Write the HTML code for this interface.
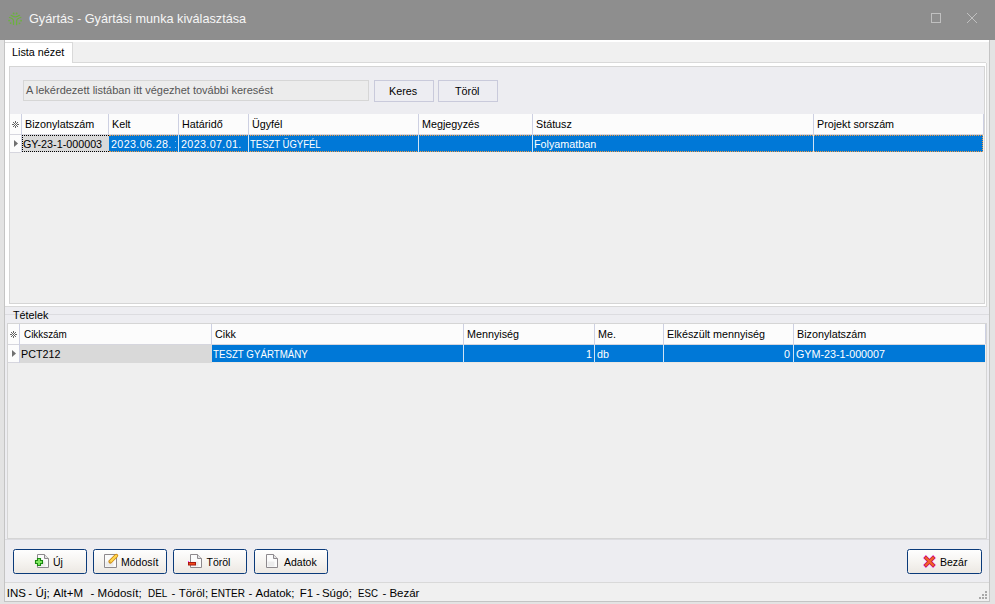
<!DOCTYPE html>
<html><head><meta charset="utf-8">
<style>
*{box-sizing:border-box;margin:0;padding:0}
html,body{width:995px;height:604px;overflow:hidden;background:#e3e3e3;font-family:"Liberation Sans",sans-serif;font-size:10.5px;color:#000}
.a{position:absolute}
.t{position:absolute;white-space:nowrap;line-height:12px;font-size:10.75px}
#title{left:0;top:0;width:995px;height:40px;background:#8e8e8e}
#client{left:4px;top:40px;width:986px;height:562px;background:#f0f0f0;border:1px solid #c4c4c4;border-top:none}
.hdr{background:#fcfcfc}
.vl{position:absolute;width:1px}
.hl{position:absolute;height:1px}
.btn{position:absolute;height:25px;width:74px;border:1px solid #0a3a7a;border-radius:2.5px;background:linear-gradient(#fefefe,#f6f4f1 50%,#ece8e3)}
.btn .lbl{position:absolute;top:6px;white-space:nowrap;font-size:10.5px;color:#000;line-height:12px}
</style></head><body>
<!-- title bar -->
<div id="title" class="a">
  <svg class="a" style="left:4px;top:8px" width="24" height="22" viewBox="4 8 24 22">
    <g fill="#6cb23d">
      <circle cx="13.6" cy="13.5" r="0.9"/><circle cx="16.6" cy="13.5" r="0.9"/>
      <circle cx="9.1" cy="20.6" r="0.9"/><circle cx="21.1" cy="20.7" r="0.9"/>
      <circle cx="10.6" cy="23.1" r="0.9"/><circle cx="19.5" cy="23.3" r="0.9"/>
    </g>
    <g stroke="#6cb23d" stroke-width="1.25" fill="none" stroke-linecap="round">
      <path d="M11.1 15.3 Q15.3 18.5 19.5 15.3"/>
      <path d="M9.5 17.5 Q13.5 18.5 13.5 21 L13.5 24.4"/>
      <path d="M20.8 17.5 Q16.6 18.5 16.6 21 L16.6 24.7"/>
    </g>
  </svg>
  <div class="t" style="left:29px;top:12px;font-size:12.7px;line-height:14px;color:#f6f6f6">Gyártás - Gyártási munka kiválasztása</div>
  <div class="a" style="left:931px;top:13px;width:10px;height:10px;border:1px solid #c0c0c0"></div>
  <svg class="a" style="left:966px;top:12px" width="12" height="12" viewBox="0 0 12 12"><path d="M1 1L11 11M11 1L1 11" stroke="#c0c0c0" stroke-width="1"/></svg>
</div>

<div id="client" class="a"></div>

<!-- tab strip -->
<div class="a" style="left:5px;top:40px;width:984px;height:2px;background:#fff"></div>
<div class="a" style="left:5px;top:42px;width:68px;height:22px;background:#fff;border-top:1px solid #d9d9d9;border-right:1px solid #d9d9d9"></div>
<div class="hl" style="left:73px;top:62px;width:913px;background:#d9d9d9"></div>
<div class="t" style="left:12px;top:46px;font-size:10.8px">Lista nézet</div>

<!-- tab page -->
<div class="a" style="left:5px;top:63px;width:982px;height:244px;background:#fff;border-right:1px solid #d9d9d9;border-bottom:1px solid #d9d9d9"></div>
<div class="a" style="left:9px;top:66px;width:976px;height:238px;background:#ededf1;border:1px solid #d5d5d5"></div>

<!-- search -->
<div class="a" style="left:23px;top:80px;width:346px;height:21px;background:#ececec;border:1px solid #d6d6d6"></div>
<div class="t" style="left:26px;top:84px;color:#555;font-size:11px">A lekérdezett listában itt végezhet további keresést</div>
<div class="a" style="left:374px;top:80px;width:60px;height:22px;background:#ededf2;border:1px solid #c9cadb"></div>
<div class="t" style="left:389px;top:85px">Keres</div>
<div class="a" style="left:438px;top:80px;width:60px;height:22px;background:#ededf2;border:1px solid #c9cadb"></div>
<div class="t" style="left:455px;top:85px">Töröl</div>

<!-- upper grid -->
<div class="a" style="left:10px;top:114px;width:974px;height:189px;background:#efefef"></div>
<div class="a hdr" style="left:10px;top:114px;width:973px;height:20px"></div>
<div class="hl" style="left:10px;top:134px;width:974px;background:#d6d6de"></div>
<div class="vl" style="left:983px;top:114px;height:20px;background:#cdd0e2"></div>
<div class="a" style="left:10px;top:135px;width:11px;height:17px;background:#fcfcfc"></div>
<div class="hl" style="left:10px;top:152px;width:11px;background:#d6d6de"></div>
<div class="a" style="left:109px;top:135px;width:874px;height:17px;background:#0078d7"></div>
<div class="a" style="left:22px;top:135px;width:87px;height:17px;background:#d9d9d9;border:1px dotted #000;border-right:none"></div>
<div class="a" style="left:109px;top:135px;width:874px;height:17px;border-top:1px dotted #f39a40;border-bottom:1px dotted #f39a40;border-right:1px dotted #f39a40"></div>
<div class="vl" style="left:21px;top:114px;height:38px;background:#cdd0e2"></div>
<div class="vl" style="left:108px;top:114px;height:20px;background:#cdd0e2"></div>
<div class="vl" style="left:178px;top:114px;height:20px;background:#cdd0e2"></div>
<div class="vl" style="left:248px;top:114px;height:20px;background:#cdd0e2"></div>
<div class="vl" style="left:418px;top:114px;height:20px;background:#cdd0e2"></div>
<div class="vl" style="left:532px;top:114px;height:20px;background:#cdd0e2"></div>
<div class="vl" style="left:813px;top:114px;height:20px;background:#cdd0e2"></div>
<div class="vl" style="left:178px;top:135px;height:17px;background:#cfe3f5"></div>
<div class="vl" style="left:248px;top:135px;height:17px;background:#cfe3f5"></div>
<div class="vl" style="left:418px;top:135px;height:17px;background:#cfe3f5"></div>
<div class="vl" style="left:532px;top:135px;height:17px;background:#cfe3f5"></div>
<div class="vl" style="left:813px;top:135px;height:17px;background:#cfe3f5"></div>
<svg class="a" style="left:10px;top:118px" width="11" height="13" shape-rendering="crispEdges"><g fill="#666"><rect x="5" y="3" width="1" height="1"/><rect x="5" y="4" width="1" height="1"/><rect x="3" y="4" width="1" height="1"/><rect x="7" y="4" width="1" height="1"/><rect x="4" y="5" width="1" height="1"/><rect x="6" y="5" width="1" height="1"/><rect x="2" y="6" width="1" height="1"/><rect x="3" y="6" width="1" height="1"/><rect x="5" y="6" width="1" height="1"/><rect x="7" y="6" width="1" height="1"/><rect x="8" y="6" width="1" height="1"/><rect x="4" y="7" width="1" height="1"/><rect x="6" y="7" width="1" height="1"/><rect x="3" y="8" width="1" height="1"/><rect x="5" y="8" width="1" height="1"/><rect x="7" y="8" width="1" height="1"/><rect x="5" y="9" width="1" height="1"/></g></svg>
<svg class="a" style="left:14px;top:140px" width="5" height="8"><path d="M0 0L4 3.5L0 7Z" fill="#707070"/></svg>
<div class="t" style="left:25px;top:118px">Bizonylatszám</div>
<div class="t" style="left:112px;top:118px">Kelt</div>
<div class="t" style="left:182px;top:118px">Határidő</div>
<div class="t" style="left:252px;top:118px">Ügyfél</div>
<div class="t" style="left:422px;top:118px">Megjegyzés</div>
<div class="t" style="left:536px;top:118px">Státusz</div>
<div class="t" style="left:817px;top:118px">Projekt sorszám</div>
<div class="t" style="left:23px;top:138px">GY-23-1-000003</div>
<div class="t" style="left:111px;top:138px;color:#fff;letter-spacing:0.35px">2023.06.28.</div>
<div class="t" style="left:181px;top:138px;color:#fff;letter-spacing:0.35px">2023.07.01.</div>
<div class="t" style="left:250px;top:138px;color:#fff;transform:scaleX(0.885);transform-origin:0 0">TESZT ÜGYFÉL</div>
<div class="t" style="left:534px;top:138px;color:#fff">Folyamatban</div>

<div class="a" style="left:175px;top:141px;width:1px;height:1px;background:#8cc4ee"></div><div class="a" style="left:175px;top:147px;width:1px;height:1px;background:#8cc4ee"></div>
<!-- Tételek group -->
<div class="a" style="left:5px;top:307px;width:984px;height:275px;background:#ededf1"></div>
<div class="hl" style="left:5px;top:314px;width:984px;background:#dcdce0"></div>
<div class="t" style="left:13px;top:309px">Tételek</div>

<!-- lower grid -->
<div class="a" style="left:7px;top:323px;width:980px;height:216px;background:#efefef;border:1px solid #d5d5d5"></div>
<div class="vl" style="left:985px;top:324px;height:20px;background:#cdd0e2"></div>
<div class="a hdr" style="left:8px;top:324px;width:977px;height:20px"></div>
<div class="hl" style="left:8px;top:344px;width:977px;background:#d6d6de"></div>
<div class="a" style="left:8px;top:345px;width:11px;height:17px;background:#fcfcfc"></div>
<div class="hl" style="left:8px;top:362px;width:11px;background:#d6d6de"></div>
<div class="a" style="left:20px;top:345px;width:192px;height:18px;background:#d9d9d9"></div>
<div class="hl" style="left:212px;top:362px;width:773px;background:#ebe7e3"></div>
<div class="a" style="left:212px;top:345px;width:773px;height:17px;background:#0078d7"></div>
<div class="vl" style="left:19px;top:324px;height:39px;background:#cdd0e2"></div>
<div class="vl" style="left:211px;top:324px;height:20px;background:#cdd0e2"></div>
<div class="vl" style="left:463px;top:324px;height:20px;background:#cdd0e2"></div>
<div class="vl" style="left:594px;top:324px;height:20px;background:#cdd0e2"></div>
<div class="vl" style="left:663px;top:324px;height:20px;background:#cdd0e2"></div>
<div class="vl" style="left:793px;top:324px;height:20px;background:#cdd0e2"></div>
<div class="vl" style="left:463px;top:345px;height:18px;background:#cfe3f5"></div>
<div class="vl" style="left:594px;top:345px;height:18px;background:#cfe3f5"></div>
<div class="vl" style="left:663px;top:345px;height:18px;background:#cfe3f5"></div>
<div class="vl" style="left:793px;top:345px;height:18px;background:#cfe3f5"></div>
<svg class="a" style="left:8px;top:328px" width="11" height="13" shape-rendering="crispEdges"><g fill="#666"><rect x="5" y="3" width="1" height="1"/><rect x="5" y="4" width="1" height="1"/><rect x="3" y="4" width="1" height="1"/><rect x="7" y="4" width="1" height="1"/><rect x="4" y="5" width="1" height="1"/><rect x="6" y="5" width="1" height="1"/><rect x="2" y="6" width="1" height="1"/><rect x="3" y="6" width="1" height="1"/><rect x="5" y="6" width="1" height="1"/><rect x="7" y="6" width="1" height="1"/><rect x="8" y="6" width="1" height="1"/><rect x="4" y="7" width="1" height="1"/><rect x="6" y="7" width="1" height="1"/><rect x="3" y="8" width="1" height="1"/><rect x="5" y="8" width="1" height="1"/><rect x="7" y="8" width="1" height="1"/><rect x="5" y="9" width="1" height="1"/></g></svg>
<svg class="a" style="left:12px;top:350px" width="5" height="8"><path d="M0 0L4 3.5L0 7Z" fill="#707070"/></svg>
<div class="t" style="left:23.5px;top:328px;transform:scaleX(0.92);transform-origin:0 0">Cikkszám</div>
<div class="t" style="left:215px;top:328px">Cikk</div>
<div class="t" style="left:467px;top:328px">Mennyiség</div>
<div class="t" style="left:598px;top:328px">Me.</div>
<div class="t" style="left:667px;top:328px">Elkészült mennyiség</div>
<div class="t" style="left:797px;top:328px">Bizonylatszám</div>
<div class="t" style="left:21px;top:348px">PCT212</div>
<div class="t" style="left:213px;top:348px;color:#fff;transform:scaleX(0.905);transform-origin:0 0">TESZT GYÁRTMÁNY</div>
<div class="t" style="left:586px;top:348px;color:#fff">1</div>
<div class="t" style="left:597px;top:348px;color:#fff">db</div>
<div class="t" style="left:784px;top:348px;color:#fff">0</div>
<div class="t" style="left:796px;top:348px;color:#fff">GYM-23-1-000007</div>
<div class="hl" style="left:5px;top:539px;width:984px;background:#dcdce0"></div>

<!-- buttons -->
<div class="btn" style="left:13px;top:549px"><div class="lbl" style="left:39px">Új</div></div>
<div class="btn" style="left:93px;top:549px"><div class="lbl" style="left:27px">Módosít</div></div>
<div class="btn" style="left:173px;top:549px"><div class="lbl" style="left:32.5px">Töröl</div></div>
<div class="btn" style="left:254px;top:549px"><div class="lbl" style="left:29px">Adatok</div></div>
<div class="btn" style="left:907px;top:549px;width:75px"><div class="lbl" style="left:32px">Bezár</div></div>

<svg class="a" style="left:0;top:0;pointer-events:none" width="995" height="604" viewBox="0 0 995 604"><path d="M37.5 554.5H44.5L48.5 558.5V567.5H37.5Z" fill="#fbfbfb" stroke="#8d898d" stroke-width="1"/><path d="M38.5 561.5h7.0V566.5H38.5Z" fill="#ececec"/><path d="M44.5 554.5V558.5H48.5" fill="#e4e4e4" stroke="#8d898d" stroke-width="1"/><path d="M37.5 558.5H40.5V560.5H42.5V563.5H40.5V565.5H37.5V563.5H35.5V560.5H37.5Z" fill="#80e860" stroke="#1b8a12" stroke-width="1.1"/><path d="M104.5 554.5H116.5L116.5 554.5V567.5H104.5Z" fill="#fbfbfb" stroke="#8d898d" stroke-width="1"/><path d="M105.5 561.5h8.0V566.5H105.5Z" fill="#ececec"/><path d="M110.3 561.7L116.3 555.7" stroke="#d08a18" stroke-width="3.8" stroke-linecap="round"/><path d="M110.5 561.5L116.2 555.8" stroke="#ffd850" stroke-width="2.2" stroke-linecap="round"/><circle cx="110" cy="562" r="0.6" fill="#9a7a30"/><path d="M190.5 554.5H197.5L201.5 558.5V567.5H190.5Z" fill="#fbfbfb" stroke="#8d898d" stroke-width="1"/><path d="M191.5 561.5h7.0V566.5H191.5Z" fill="#ececec"/><path d="M197.5 554.5V558.5H201.5" fill="#e4e4e4" stroke="#8d898d" stroke-width="1"/><rect x="188.5" y="562.5" width="7" height="2.5" fill="#f04a1a" stroke="#a81810" stroke-width="1"/><rect x="188" y="561" width="1" height="1" fill="#ff30ff"/><path d="M266.5 554.5H273.5L277.5 558.5V567.5H266.5Z" fill="#fbfbfb" stroke="#8d898d" stroke-width="1"/><path d="M267.5 561.5h7.0V566.5H267.5Z" fill="#ececec"/><path d="M273.5 554.5V558.5H277.5" fill="#e4e4e4" stroke="#8d898d" stroke-width="1"/><path d="M924.5 556.5L934.5 566.5M934.5 556.5L924.5 566.5" stroke="#e020e0" stroke-width="3.9"/><path d="M924.9 556.9L934.1 566.1M934.1 556.9L924.9 566.1" stroke="#c02818" stroke-width="3"/><path d="M925.3 557.3L933.7 565.7M933.7 557.3L925.3 565.7" stroke="#f2622c" stroke-width="2.1"/></svg>
<!-- status bar -->
<div class="hl" style="left:5px;top:582px;width:984px;background:#d9d9d9"></div>
<div class="a" style="left:5px;top:583px;width:984px;height:17px;background:#f0f0f0"></div>
<div class="a" style="left:0;top:587px;font-size:11.5px;line-height:13px;white-space:nowrap"><span class="a" style="left:6.8px;top:0">INS</span><span class="a" style="left:28.3px;top:0">-</span><span class="a" style="left:35.6px;top:0">Új;</span><span class="a" style="left:53.3px;top:0">Alt+M</span><span class="a" style="left:90.5px;top:0">-</span><span class="a" style="left:97.6px;top:0">Módosít;</span><span class="a" style="left:147.8px;top:0;transform:scaleX(0.86);transform-origin:0 0">DEL</span><span class="a" style="left:171.5px;top:0">-</span><span class="a" style="left:178.7px;top:0">Töröl;</span><span class="a" style="left:210.6px;top:0;transform:scaleX(0.87);transform-origin:0 0">ENTER</span><span class="a" style="left:248.5px;top:0">-</span><span class="a" style="left:255.5px;top:0">Adatok;</span><span class="a" style="left:299.8px;top:0">F1</span><span class="a" style="left:316.1px;top:0">-</span><span class="a" style="left:321.9px;top:0">Súgó;</span><span class="a" style="left:358.4px;top:0;transform:scaleX(0.84);transform-origin:0 0">ESC</span><span class="a" style="left:382.5px;top:0">-</span><span class="a" style="left:389.4px;top:0">Bezár</span></div>
<div class="a" style="left:985px;top:591px;width:2px;height:2px;background:#a8a8a8"></div><div class="a" style="left:982px;top:594px;width:2px;height:2px;background:#a8a8a8"></div><div class="a" style="left:985px;top:594px;width:2px;height:2px;background:#a8a8a8"></div><div class="a" style="left:979px;top:597px;width:2px;height:2px;background:#a8a8a8"></div><div class="a" style="left:982px;top:597px;width:2px;height:2px;background:#a8a8a8"></div><div class="a" style="left:985px;top:597px;width:2px;height:2px;background:#a8a8a8"></div>
</body></html>
